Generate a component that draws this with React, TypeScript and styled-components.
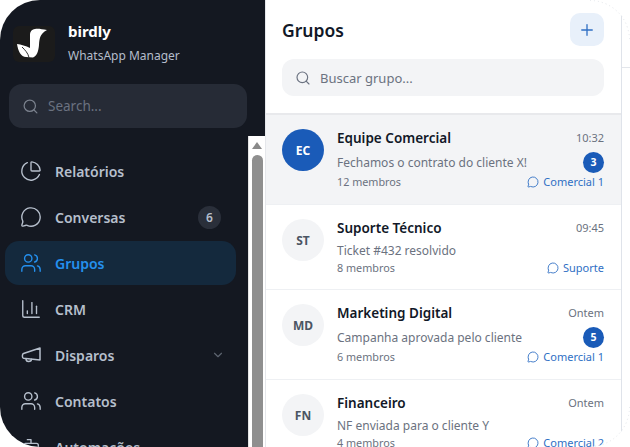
import React from 'react';
import styled, { createGlobalStyle } from 'styled-components';
import {
  Bot,
  ChartColumn,
  ChevronDown,
  MessageCircle,
  PieChart,
  Plus,
  Search,
  Users,
} from 'lucide-react';

const GlobalStyle = createGlobalStyle`
  html, body {
    margin: 0;
    padding: 0;
    background: #fff;
    overflow: hidden;
  }
  * {
    box-sizing: border-box;
  }
  body {
    font-family: "Noto Sans", "Open Sans", sans-serif;
  }
`;

const Frame = styled.div`
  position: relative;
  width: 630px;
  height: 447px;
  overflow: hidden;
  background: #fff;
`;

const Window = styled.div`
  display: flex;
  width: 630px;
  height: 447px;
  overflow: hidden;
  border-radius: 40px;
  background: #fff;
`;

const Sidebar = styled.aside`
  display: flex;
  flex-direction: column;
  flex: 0 0 265px;
  height: 100%;
  background: #141821;
`;

const Brand = styled.div`
  display: flex;
  align-items: flex-start;
  gap: 13px;
  height: 84px;
  padding: 21px 0 0 13px;
`;

const LogoBox = styled.div`
  display: flex;
  width: 42px;
  height: 36px;
  margin-top: 5px;
  border-radius: 6px;
  background: #1b1b1b;
`;

const BrandText = styled.div`
  display: flex;
  flex-direction: column;
  gap: 6px;
`;

const BrandName = styled.div`
  color: #fff;
  font-size: 15px;
  font-weight: 700;
  line-height: 20px;
`;

const BrandSub = styled.div`
  color: #b4bdcb;
  font-size: 12px;
  line-height: 18px;
`;

const SideSearch = styled.div`
  display: flex;
  align-items: center;
  gap: 9px;
  width: 238px;
  height: 44px;
  margin-left: 9px;
  padding-left: 13px;
  border-radius: 13px;
  background: #262b36;
  color: #6b7280;
  font-size: 13.5px;
`;

const NavArea = styled.div`
  display: flex;
  flex: 1;
  min-height: 0;
  margin-top: 8px;
`;

const NavList = styled.nav`
  display: flex;
  flex-direction: column;
  flex: 1;
  gap: 2px;
  padding: 13px 12px 0 5px;
  overflow: hidden;
`;

const NavItem = styled.div<{ $active?: boolean }>`
  display: flex;
  flex: 0 0 44px;
  align-items: center;
  gap: 13px;
  padding: 0 11px 0 15px;
  border-radius: 14px;
  background: ${(p) => (p.$active ? '#14293d' : 'transparent')};
  color: ${(p) => (p.$active ? '#2490ef' : '#b6bfcc')};
  font-size: 14px;
  font-weight: 600;

  svg {
    flex: none;
  }
`;

const NavLabel = styled.span`
  flex: 1;
`;

const NavCount = styled.span`
  display: flex;
  align-items: center;
  justify-content: center;
  width: 23px;
  height: 23px;
  margin-right: 4px;
  border-radius: 50%;
  background: #2a2f3a;
  color: #b6bfcc;
  font-size: 12px;
`;

const NavChevron = styled(ChevronDown)`
  margin-right: 0;
  color: #5d6470;
`;

const ScrollTrack = styled.div`
  display: flex;
  flex-direction: column;
  align-items: center;
  flex: 0 0 17px;
  background: #fff;
  border-left: 1px solid #e4e4e4;
`;

const ScrollArrow = styled.div`
  width: 0;
  height: 0;
  margin-top: 6px;
  border-left: 5px solid transparent;
  border-right: 5px solid transparent;
  border-bottom: 7px solid #8a8a8a;
`;

const ScrollThumb = styled.div`
  flex: 1;
  width: 11px;
  margin-top: 6px;
  border-radius: 6px 6px 0 0;
  background: #8f8f8f;
`;

const Panel = styled.section`
  display: flex;
  flex-direction: column;
  flex: 0 0 357px;
  height: 100%;
  background: #fff;
  border-left: 1px solid #e5e7eb;
  border-right: 1px solid #dfe3ea;
`;

const PanelHead = styled.header`
  padding: 13px 17px 17px 16px;
  border-bottom: 2px solid #e8e9ec;
`;

const TitleRow = styled.div`
  display: flex;
  align-items: center;
  justify-content: space-between;
  height: 33px;
  margin-bottom: 13px;
`;

const Title = styled.h1`
  margin: 0;
  color: #111827;
  font-size: 17.5px;
  font-weight: 600;
`;

const AddButton = styled.button`
  display: flex;
  align-items: center;
  justify-content: center;
  width: 34px;
  height: 33px;
  padding: 0;
  border: 0;
  border-radius: 10px;
  background: #e8f0fa;
  color: #2f6fc4;
`;

const GroupSearch = styled.div`
  display: flex;
  align-items: center;
  gap: 9px;
  height: 37px;
  padding-left: 13px;
  border-radius: 12px;
  background: #f3f4f6;
  color: #6b7280;
  font-size: 13px;
`;

const List = styled.div`
  flex: 1;
  overflow: hidden;
`;

const Row = styled.article<{ $active?: boolean; $height: number }>`
  display: flex;
  gap: 13px;
  height: ${(p) => p.$height}px;
  padding: 14px 17px 0 16px;
  border-bottom: 1px solid #eef0f3;
  background: ${(p) => (p.$active ? '#f3f4f6' : '#fff')};
`;

const Avatar = styled.div<{ $active?: boolean }>`
  display: flex;
  flex: 0 0 42px;
  align-items: center;
  justify-content: center;
  height: 42px;
  border-radius: 50%;
  background: ${(p) => (p.$active ? '#1a5bb8' : '#f3f4f6')};
  color: ${(p) => (p.$active ? '#fff' : '#4b5563')};
  font-size: 12px;
  font-weight: 700;
`;

const RowBody = styled.div`
  display: flex;
  flex: 1;
  flex-direction: column;
  min-width: 0;
`;

const Line = styled.div`
  display: flex;
  align-items: center;
  justify-content: space-between;
`;

const TopLine = styled(Line)`
  height: 18px;
  margin-bottom: 3px;
`;

const MessageLine = styled(Line)<{ $tall?: boolean }>`
  height: ${(p) => (p.$tall ? 24 : 20)}px;
`;

const GroupName = styled.div`
  color: #111827;
  font-size: 13.5px;
  font-weight: 600;
`;

const Time = styled.div`
  margin-bottom: 2px;
  color: #6b7280;
  font-size: 11px;
`;

const Message = styled.div`
  color: #6b7280;
  font-size: 12px;
`;

const Unread = styled.div`
  display: flex;
  align-items: center;
  justify-content: center;
  width: 21px;
  height: 21px;
  border-radius: 50%;
  background: #1a5bb8;
  color: #fff;
  font-size: 10.5px;
  font-weight: 700;
`;

const Members = styled.div`
  color: #6b7280;
  font-size: 10.8px;
`;

const Channel = styled.div`
  display: flex;
  align-items: center;
  gap: 4px;
  color: #2f6fc4;
  font-size: 11px;
`;

const RightStrip = styled.div`
  flex: 1;
  padding-top: 67px;
`;

const StripLine = styled.div`
  height: 1px;
  background: #e3e6eb;
`;

const CornerArc = styled.svg<{ $bottom?: boolean }>`
  position: absolute;
  right: 0;
  ${(p) => (p.$bottom ? 'bottom: 0;' : 'top: 0;')}
`;

const BirdLogo = () => (
  <svg width="42" height="36" viewBox="0 0 42 36" aria-hidden="true">
    <path
      fill="#fff"
      d="M34 4C29 3.5 26 2.5 22 3C18.5 3.5 17 6 17 9L17 22C13 20 8 18.5 4 18C5 25 8 31 13 31L20 31.5C24 30 25.5 25 26 19C26.5 13 26.5 8 34 4Z"
    />
    <path stroke="#1b1b1b" strokeWidth="0.9" fill="none" d="M9 21C12 24 15 27 16 31.5" />
  </svg>
);

const MegaphoneIcon = ({ size = 22, strokeWidth = 1.5 }: { size?: number; strokeWidth?: number }) => (
  <svg
    width={size}
    height={size}
    viewBox="0 0 22 22"
    fill="none"
    stroke="currentColor"
    strokeWidth={strokeWidth}
    strokeLinecap="round"
    strokeLinejoin="round"
    aria-hidden="true"
  >
    <path d="M20 4L3.5 9.5C2 10 2 14 3.5 14.2L20 16Z" />
    <path d="M6 14.7C6 16.5 7 17.5 8.5 17.5C10.5 17.5 11.5 16.5 11.5 15.3" />
  </svg>
);

type NavEntry = {
  label: string;
  Icon: React.ComponentType<{ size?: number; strokeWidth?: number }>;
  count?: number;
  active?: boolean;
  expandable?: boolean;
};

const navEntries: NavEntry[] = [
  { label: 'Relatórios', Icon: PieChart },
  { label: 'Conversas', Icon: MessageCircle, count: 6 },
  { label: 'Grupos', Icon: Users, active: true },
  { label: 'CRM', Icon: ChartColumn },
  { label: 'Disparos', Icon: MegaphoneIcon, expandable: true },
  { label: 'Contatos', Icon: Users },
  { label: 'Automações', Icon: Bot },
];

type Group = {
  initials: string;
  name: string;
  time: string;
  message: string;
  members: string;
  channel: string;
  unread?: number;
  active?: boolean;
  height: number;
};

const groups: Group[] = [
  {
    initials: 'EC',
    name: 'Equipe Comercial',
    time: '10:32',
    message: 'Fechamos o contrato do cliente X!',
    members: '12 membros',
    channel: 'Comercial 1',
    unread: 3,
    active: true,
    height: 90,
  },
  {
    initials: 'ST',
    name: 'Suporte Técnico',
    time: '09:45',
    message: 'Ticket #432 resolvido',
    members: '8 membros',
    channel: 'Suporte',
    height: 85,
  },
  {
    initials: 'MD',
    name: 'Marketing Digital',
    time: 'Ontem',
    message: 'Campanha aprovada pelo cliente',
    members: '6 membros',
    channel: 'Comercial 1',
    unread: 5,
    height: 90,
  },
  {
    initials: 'FN',
    name: 'Financeiro',
    time: 'Ontem',
    message: 'NF enviada para o cliente Y',
    members: '4 membros',
    channel: 'Comercial 2',
    height: 85,
  },
];

export default function App() {
  return (
    <Frame>
      <GlobalStyle />
      <Window>
        <Sidebar>
          <Brand>
            <LogoBox>
              <BirdLogo />
            </LogoBox>
            <BrandText>
              <BrandName>birdly</BrandName>
              <BrandSub>WhatsApp Manager</BrandSub>
            </BrandText>
          </Brand>
          <SideSearch>
            <Search size={17} color="#7a818d" strokeWidth={1.75} />
            Search...
          </SideSearch>
          <NavArea>
            <NavList>
              {navEntries.map(({ label, Icon, count, active, expandable }) => (
                <NavItem key={label} $active={active}>
                  <Icon size={22} strokeWidth={1.5} />
                  <NavLabel>{label}</NavLabel>
                  {count !== undefined && <NavCount>{count}</NavCount>}
                  {expandable && <NavChevron size={14} />}
                </NavItem>
              ))}
            </NavList>
            <ScrollTrack>
              <ScrollArrow />
              <ScrollThumb />
            </ScrollTrack>
          </NavArea>
        </Sidebar>

        <Panel>
          <PanelHead>
            <TitleRow>
              <Title>Grupos</Title>
              <AddButton aria-label="Novo grupo">
                <Plus size={18} strokeWidth={1.75} />
              </AddButton>
            </TitleRow>
            <GroupSearch>
              <Search size={16} color="#6b7280" strokeWidth={1.75} />
              Buscar grupo...
            </GroupSearch>
          </PanelHead>
          <List>
            {groups.map((g) => (
              <Row key={g.initials} $active={g.active} $height={g.height}>
                <Avatar $active={g.active}>{g.initials}</Avatar>
                <RowBody>
                  <TopLine>
                    <GroupName>{g.name}</GroupName>
                    <Time>{g.time}</Time>
                  </TopLine>
                  <MessageLine $tall={g.unread !== undefined}>
                    <Message>{g.message}</Message>
                    {g.unread !== undefined && <Unread>{g.unread}</Unread>}
                  </MessageLine>
                  <Line>
                    <Members>{g.members}</Members>
                    <Channel>
                      <MessageCircle size={12} strokeWidth={1.75} />
                      {g.channel}
                    </Channel>
                  </Line>
                </RowBody>
              </Row>
            ))}
          </List>
        </Panel>

        <RightStrip>
          <StripLine />
        </RightStrip>
      </Window>

      <CornerArc width="40" height="40" viewBox="0 0 40 40" fill="none" aria-hidden="true">
        <path d="M0 0.5A39.5 39.5 0 0 1 39.5 40" stroke="#e3e6eb" strokeDasharray="1 3" />
      </CornerArc>
      <CornerArc $bottom width="40" height="40" viewBox="0 0 40 40" fill="none" aria-hidden="true">
        <path d="M39.5 0A39.5 39.5 0 0 1 0 39.5" stroke="#e3e6eb" strokeDasharray="1 3" />
      </CornerArc>
    </Frame>
  );
}
